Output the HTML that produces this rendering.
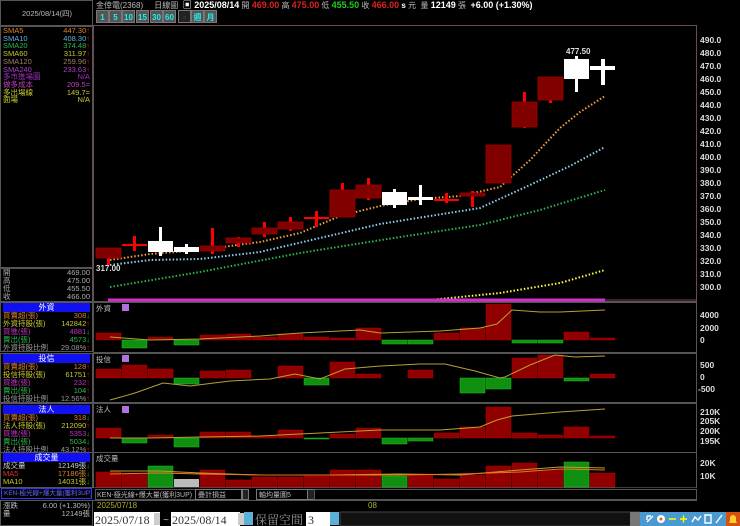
<!DOCTYPE html>
<html><head><meta charset="utf-8"><style>
*{margin:0;padding:0;box-sizing:border-box}
body{width:740px;height:526px;background:#000;overflow:hidden;position:relative;font-family:"Liberation Sans","Noto Sans CJK TC",sans-serif;font-size:8px;color:#ccc}
.a{position:absolute;white-space:nowrap}
.r{position:absolute;left:3px;right:3px;height:8px;line-height:8px;font-size:7.5px}
.r span{position:absolute;right:0}
.hd{position:absolute;left:3px;width:87px;height:9px;background:#1010f0;color:#fff;text-align:center;line-height:9px;font-size:8px}
.box{position:absolute;border:1px solid #555}
.btn{position:absolute;top:10px;height:13px;width:13px;background:#555;color:#2ee;font-size:8px;font-weight:bold;text-align:center;line-height:13px;border:1px solid #777}
</style></head><body>
<div class="box" style="left:0;top:0;width:93px;height:26px"></div>
<div class="a" style="left:22px;top:8px;color:#bbb;font-size:7.5px">2025/08/14(四)</div>
<div class="box" style="left:0;top:26px;width:93px;height:242px"></div>
<div style="position:absolute;left:0;top:27px;width:93px">
<div class="r" style="top:0;color:#d9822b">SMA5<span>447.30<b style="color:#f00">↑</b></span></div>
<div class="r" style="top:7.7px;color:#5ab4e0">SMA10<span>408.30<b style="color:#f00">↑</b></span></div>
<div class="r" style="top:15.4px;color:#2db84a">SMA20<span>374.48<b style="color:#f00">↑</b></span></div>
<div class="r" style="top:23.1px;color:#c8c832">SMA60<span>311.97<b style="color:#f00">↑</b></span></div>
<div class="r" style="top:30.8px;color:#a08060">SMA120<span>259.96<b style="color:#f00">↑</b></span></div>
<div class="r" style="top:38.5px;color:#b040d0">SMA240<span>233.63<b style="color:#f00">↑</b></span></div>
<div class="r" style="top:46.2px;color:#a030c0">多市進場圖<span>N/A</span></div>
<div class="r" style="top:53.9px;color:#c040c0">做多成本<span>209.5=</span></div>
<div class="r" style="top:61.6px;color:#c8c832">多出場線<span>149.7=</span></div>
<div class="r" style="top:69.3px;color:#c8c832">面場<span>N/A</span></div>
</div>
<div class="box" style="left:0;top:268px;width:93px;height:34px"></div>
<div style="position:absolute;left:0;top:269px;width:93px;color:#aaa">
<div class="r" style="top:0">開<span>469.00</span></div>
<div class="r" style="top:8px">高<span>475.00</span></div>
<div class="r" style="top:16px">低<span>455.50</span></div>
<div class="r" style="top:24px">收<span>466.00</span></div>
</div>
<div class="box" style="left:0;top:302px;width:93px;height:50px"></div>
<div class="hd" style="top:303px">外資</div>
<div style="position:absolute;left:0;top:312px;width:93px">
<div class="r" style="top:0;color:#d9822b">買賣超(張)<span>308<b style="color:#0c0">↓</b></span></div>
<div class="r" style="top:8px;color:#c8c832">外資持股(張)<span>142842<b style="color:#f00">↑</b></span></div>
<div class="r" style="top:16px;color:#c030c0">買進(張)<span>4881<b style="color:#0c0">↓</b></span></div>
<div class="r" style="top:24px;color:#2db84a">賣出(張)<span>4573<b style="color:#0c0">↓</b></span></div>
<div class="r" style="top:32px;color:#999">外資持股比例<span>29.08%<b style="color:#f00">↑</b></span></div>
</div>
<div class="box" style="left:0;top:353px;width:93px;height:50px"></div>
<div class="hd" style="top:354px">投信</div>
<div style="position:absolute;left:0;top:363px;width:93px">
<div class="r" style="top:0;color:#d9822b">買賣超(張)<span>128<b style="color:#f00">↑</b></span></div>
<div class="r" style="top:8px;color:#c8c832">投信持股(張)<span>61751<b style="color:#f00">↑</b></span></div>
<div class="r" style="top:16px;color:#c030c0">買進(張)<span>232<b style="color:#f00">↑</b></span></div>
<div class="r" style="top:24px;color:#2db84a">賣出(張)<span>104<b style="color:#f00">↑</b></span></div>
<div class="r" style="top:32px;color:#999">投信持股比例<span>12.56%<b style="color:#f00">↑</b></span></div>
</div>
<div class="box" style="left:0;top:403px;width:93px;height:50px"></div>
<div class="hd" style="top:405px">法人</div>
<div style="position:absolute;left:0;top:414px;width:93px">
<div class="r" style="top:0;color:#d9822b">買賣超(張)<span>318<b style="color:#0c0">↓</b></span></div>
<div class="r" style="top:8px;color:#c8c832">法人持股(張)<span>212090<b style="color:#f00">↑</b></span></div>
<div class="r" style="top:16px;color:#c030c0">買進(張)<span>5353<b style="color:#0c0">↓</b></span></div>
<div class="r" style="top:24px;color:#2db84a">賣出(張)<span>5034<b style="color:#0c0">↓</b></span></div>
<div class="r" style="top:32px;color:#999">法人持股比例<span>43.12%<b style="color:#f00">↑</b></span></div>
</div>
<div class="box" style="left:0;top:452px;width:93px;height:36px"></div>
<div class="hd" style="top:453px">成交量</div>
<div style="position:absolute;left:0;top:462px;width:93px">
<div class="r" style="top:0;color:#ccc">成交量<span>12149張<b style="color:#0c0">↓</b></span></div>
<div class="r" style="top:8px;color:#e03030">MA5<span style="color:#d9822b">17186張<b style="color:#0c0">↓</b></span></div>
<div class="r" style="top:16px;color:#c8c832">MA10<span>14031張<b style="color:#0c0">↓</b></span></div>
</div>
<div class="a" style="left:1px;top:488px;width:91px;height:11px;border:1px solid #33f;color:#66f;font-size:6.5px;line-height:9px;padding-left:2px;overflow:hidden">KEN-極光線+爆大量(獲利3UP)</div>
<div class="box" style="left:0;top:500px;width:93px;height:26px"></div>
<div style="position:absolute;left:0;top:502px;width:93px;color:#bbb">
<div class="r" style="top:0">漲跌<span>6.00 (+1.30%)</span></div>
<div class="r" style="top:8px">量<span>12149張</span></div>
</div>

<div class="a" style="left:96px;top:0;font-size:8px;color:#bbb;line-height:10px">金倖電(2368) &nbsp; &nbsp; 日線圖 &nbsp;<b style="color:#fff;font-size:9px">▣ 2025/08/14</b> 開 <b style="color:#e02020;font-size:9px">469.00</b> 高 <b style="color:#e02020;font-size:9px">475.00</b> 低 <b style="color:#2c2;font-size:9px">455.50</b> 收 <b style="color:#e02020;font-size:9px">466.00</b> <b style="color:#fff">s</b> 元 &nbsp;量 <b style="color:#fff;font-size:9px">12149</b> 張 &nbsp;<b style="color:#fff;font-size:9px">+6.00 (+1.30%)</b></div>
<div class="btn" style="left:96px">1</div><div class="btn" style="left:109px">5</div><div class="btn" style="left:122px">10</div><div class="btn" style="left:136px">15</div><div class="btn" style="left:150px">30</div><div class="btn" style="left:163px">60</div><div class="btn" style="left:178px;background:#222;color:#555">▫</div><div class="btn" style="left:191px">週</div><div class="btn" style="left:204px">月</div>

<svg class="a" style="left:0;top:0" width="740" height="526" viewBox="0 0 740 526">
<g fill="none" stroke="#6b4a55"><rect x="93.5" y="25.5" width="603" height="276"/></g>
<g stroke="#555" fill="none"><rect x="93.5" y="302.5" width="603" height="50"/><rect x="93.5" y="353.5" width="603" height="49"/><rect x="93.5" y="403.5" width="603" height="49"/><rect x="93.5" y="452.5" width="603" height="48"/></g>
<line x1="93" y1="488" x2="697" y2="488" stroke="#777"/>
<g fill="#ddd" font-size="8.5" font-weight="bold" font-family="Liberation Sans">
<text x="700" y="43">490.0</text><text x="700" y="56">480.0</text><text x="700" y="69">470.0</text><text x="700" y="82">460.0</text><text x="700" y="95">450.0</text><text x="700" y="108">440.0</text><text x="700" y="121">430.0</text><text x="700" y="134">420.0</text><text x="700" y="147">410.0</text><text x="700" y="160">400.0</text><text x="700" y="173">390.0</text><text x="700" y="186">380.0</text><text x="700" y="199">370.0</text><text x="700" y="212">360.0</text><text x="700" y="225">350.0</text><text x="700" y="238">340.0</text><text x="700" y="251">330.0</text><text x="700" y="264">320.0</text><text x="700" y="277">310.0</text><text x="700" y="290">300.0</text>
<text x="700" y="318">4000</text><text x="700" y="331">2000</text><text x="700" y="343">0</text>
<text x="700" y="368">500</text><text x="700" y="380">0</text><text x="698" y="392">-500</text>
<text x="700" y="415">210K</text><text x="700" y="424">205K</text><text x="700" y="434">200K</text><text x="700" y="444">195K</text>
<text x="700" y="466">20K</text><text x="700" y="479">10K</text><text x="700" y="496">200</text>
<text x="566" y="54" font-size="8">477.50</text><text x="96" y="271" font-size="8">317.00</text>
</g>
<polyline fill="none" stroke="#ffff40" stroke-width="2" stroke-dasharray="1.5 2" points="430,300 500,293 560,283 605,270"/>
<polyline fill="none" stroke="#2db84a" stroke-width="2" stroke-dasharray="1.5 2" points="110,287 200,272 300,253 400,237 480,225 540,210 605,190"/>
<polyline fill="none" stroke="#8ed0f0" stroke-width="2" stroke-dasharray="1.5 2" points="110,265 150,260 200,259 260,252 320,238 380,224 430,216 480,208 530,185 570,166 605,147"/>
<polyline fill="none" stroke="#f0a040" stroke-width="2" stroke-dasharray="1.5 2" points="110,260 150,254 200,250 260,242 300,233 340,216 380,206 420,199 460,196 500,187 530,160 560,128 580,112 605,96"/>
<line x1="108" y1="300" x2="605" y2="300" stroke="#d030d0" stroke-width="3"/>
<line x1="605" y1="300" x2="697" y2="300" stroke="#6b4a55"/>
<g fill="#ff0000">
<rect x="107" y="258" width="3" height="7"/><rect x="133" y="236" width="3" height="15"/><rect x="211" y="228" width="3" height="26"/><rect x="237" y="237" width="3" height="10"/><rect x="263" y="222" width="3" height="15"/><rect x="289" y="217" width="3" height="14"/><rect x="315" y="211" width="3" height="16"/><rect x="341" y="183" width="3" height="8"/><rect x="367" y="178" width="3" height="22"/><rect x="445" y="193" width="3" height="10"/><rect x="471" y="191" width="3" height="16"/><rect x="523" y="92" width="3" height="36"/><rect x="549" y="99" width="3" height="4"/>
<rect x="122" y="244" width="25" height="2"/><rect x="304" y="217" width="25" height="2"/><rect x="434" y="199" width="25" height="2"/>
</g>
<g fill="#800000" stroke="#a00000" stroke-width="0.8">
<rect x="96" y="248" width="25" height="10"/><rect x="200" y="246" width="25" height="5"/><rect x="226" y="238" width="25" height="5"/><rect x="252" y="228" width="25" height="6"/><rect x="278" y="222" width="25" height="7"/><rect x="330" y="190" width="25" height="27"/><rect x="356" y="185" width="25" height="13"/><rect x="460" y="193" width="25" height="3"/><rect x="486" y="145" width="25" height="38"/><rect x="512" y="102" width="25" height="25"/><rect x="538" y="77" width="25" height="23"/>
</g>
<g fill="#fff">
<rect x="159" y="227" width="3" height="29"/><rect x="148" y="241" width="25" height="11"/>
<rect x="185" y="244" width="3" height="10"/><rect x="174" y="247" width="25" height="5"/>
<rect x="393" y="189" width="3" height="19"/><rect x="382" y="192" width="25" height="13"/>
<rect x="419" y="185" width="3" height="20"/><rect x="408" y="197" width="25" height="3"/>
<rect x="575" y="56" width="3" height="36"/><rect x="564" y="59" width="25" height="20"/>
<rect x="601" y="59" width="4" height="26"/><rect x="590" y="66" width="25" height="4"/>
</g>
<g fill="#bbb" font-size="7.5"><text x="96" y="311">外資</text><text x="96" y="362">投信</text><text x="96" y="412">法人</text><text x="96" y="461">成交量</text></g>
<g fill="#b070e0"><rect x="122" y="304" width="7" height="7"/><rect x="122" y="355" width="7" height="7"/><rect x="122" y="406" width="7" height="7"/></g>
<g fill="#900000" stroke="#b00000" stroke-width="0.5">
<rect x="96" y="333" width="25" height="7"/><rect x="148" y="337" width="25" height="3"/><rect x="200" y="335" width="25" height="5"/><rect x="226" y="334" width="25" height="6"/><rect x="252" y="337" width="25" height="3"/><rect x="278" y="334" width="25" height="6"/><rect x="304" y="337" width="25" height="3"/><rect x="330" y="338" width="25" height="2"/><rect x="356" y="328" width="25" height="12"/><rect x="434" y="333" width="25" height="7"/><rect x="460" y="328" width="25" height="12"/><rect x="486" y="304" width="25" height="36"/><rect x="564" y="332" width="25" height="8"/><rect x="590" y="338" width="25" height="2"/>
</g>
<g fill="#109010" stroke="#20c020" stroke-width="0.5">
<rect x="122" y="340" width="25" height="8"/><rect x="174" y="340" width="25" height="5"/><rect x="382" y="340" width="25" height="4"/><rect x="408" y="340" width="25" height="4"/><rect x="512" y="340" width="25" height="3"/><rect x="538" y="340" width="25" height="3"/>
</g>
<polyline fill="none" stroke="#b8a030" stroke-width="1" points="110,337 150,340 200,339 260,336 300,333 360,330 380,333 440,331 480,328 497,324 512,310 540,312 560,312 605,310"/>
<g fill="#900000" stroke="#b00000" stroke-width="0.5">
<rect x="96" y="369" width="25" height="9"/><rect x="122" y="365" width="25" height="13"/><rect x="148" y="369" width="25" height="9"/><rect x="200" y="371" width="25" height="7"/><rect x="226" y="370" width="25" height="8"/><rect x="278" y="366" width="25" height="12"/><rect x="330" y="362" width="25" height="16"/><rect x="356" y="374" width="25" height="4"/><rect x="408" y="370" width="25" height="8"/><rect x="512" y="358" width="25" height="20"/><rect x="538" y="355" width="25" height="23"/><rect x="590" y="374" width="25" height="4"/>
</g>
<g fill="#109010" stroke="#20c020" stroke-width="0.5">
<rect x="174" y="378" width="25" height="6"/><rect x="304" y="378" width="25" height="7"/><rect x="460" y="378" width="25" height="15"/><rect x="486" y="378" width="25" height="11"/><rect x="564" y="378" width="25" height="3"/>
</g>
<polyline fill="none" stroke="#b8a030" stroke-width="1" points="110,400 135,393 163,383 190,386 230,381 270,379 295,374 320,379 345,369 380,366 420,364 445,364 475,371 500,378 505,377 530,365 555,355 575,357 605,356"/>
<g fill="#900000" stroke="#b00000" stroke-width="0.5">
<rect x="96" y="428" width="25" height="10"/><rect x="148" y="435" width="25" height="3"/><rect x="200" y="432" width="25" height="6"/><rect x="226" y="432" width="25" height="6"/><rect x="252" y="436" width="25" height="2"/><rect x="278" y="430" width="25" height="8"/><rect x="330" y="434" width="25" height="4"/><rect x="356" y="428" width="25" height="10"/><rect x="434" y="433" width="25" height="5"/><rect x="460" y="427" width="25" height="11"/><rect x="486" y="407" width="25" height="31"/><rect x="512" y="433" width="25" height="5"/><rect x="538" y="435" width="25" height="3"/><rect x="564" y="427" width="25" height="11"/><rect x="590" y="436" width="25" height="2"/>
</g>
<g fill="#109010" stroke="#20c020" stroke-width="0.5">
<rect x="122" y="438" width="25" height="5"/><rect x="174" y="438" width="25" height="9"/><rect x="304" y="438" width="25" height="1"/><rect x="382" y="438" width="25" height="6"/><rect x="408" y="438" width="25" height="3"/>
</g>
<polyline fill="none" stroke="#b8a030" stroke-width="1" points="110,438 150,438 200,437 260,436 300,434 340,432 380,430 440,430 480,427 497,420 512,416 560,412 605,409"/>
<g fill="#900000" stroke="#b00000" stroke-width="0.5">
<rect x="96" y="472" width="25" height="15"/><rect x="122" y="474" width="25" height="13"/><rect x="200" y="470" width="25" height="17"/><rect x="226" y="480" width="25" height="7"/><rect x="252" y="477" width="25" height="10"/><rect x="278" y="477" width="25" height="10"/><rect x="304" y="476" width="25" height="11"/><rect x="330" y="470" width="25" height="17"/><rect x="356" y="470" width="25" height="17"/><rect x="408" y="474" width="25" height="13"/><rect x="434" y="479" width="25" height="8"/><rect x="460" y="475" width="25" height="12"/><rect x="486" y="466" width="25" height="21"/><rect x="512" y="463" width="25" height="24"/><rect x="538" y="470" width="25" height="17"/><rect x="590" y="473" width="25" height="14"/>
</g>
<g fill="#109010" stroke="#20c020" stroke-width="0.5"><rect x="148" y="466" width="25" height="21"/><rect x="382" y="476" width="25" height="11"/><rect x="564" y="462" width="25" height="25"/></g>
<rect x="174" y="479" width="25" height="8" fill="#bbb"/>
<polyline fill="none" stroke="#b8a030" stroke-width="1" points="110,471 160,471 200,473 260,475 330,475 400,474 460,475 520,470 560,467 605,468"/>
<polyline fill="none" stroke="#f07020" stroke-width="1" points="110,474 160,473 200,474 260,475 330,475 400,475 460,474 520,472 560,469 605,470"/>
<rect x="93" y="488" width="647" height="12" fill="#000"/>
<rect x="95.5" y="489.5" width="100" height="10" fill="#000" stroke="#555"/>
<rect x="195.5" y="489.5" width="46" height="10" fill="#000" stroke="#777"/>
<rect x="242.5" y="489.5" width="6" height="10" fill="#222" stroke="#777"/>
<rect x="256.5" y="489.5" width="51" height="10" fill="#000" stroke="#777"/>
<rect x="307.5" y="489.5" width="7" height="10" fill="#222" stroke="#777"/>
<rect x="314.5" y="489.5" width="382" height="10" fill="#000" stroke="#555"/>
<g fill="#bbb" font-size="7"><text x="97" y="497">KEN-極光線+爆大量(獲利3UP)</text><text x="198" y="497">疊計損益</text><text x="259" y="497">軸均量圖5</text></g>
<text x="97" y="508" fill="#b0b030" font-size="8">2025/07/18</text>
<text x="368" y="508" fill="#b0b030" font-size="8">08</text>
<rect x="93" y="511" width="647" height="15" fill="#000"/>
<rect x="94" y="512" width="66" height="14" fill="#fff"/><rect x="154" y="513" width="6" height="12" fill="#ccc"/>
<rect x="171" y="512" width="69" height="14" fill="#fff"/><rect x="238" y="513" width="6" height="12" fill="#ccc"/>
<rect x="244" y="512" width="9" height="13" fill="#5ab0d8"/>
<g font-family="Liberation Serif" fill="#333" font-size="12"><text x="95" y="524">2025/07/18</text><text x="172" y="524">2025/08/14</text></g>
<text x="163" y="523" fill="#bbb" font-size="10">~</text>
<text x="255" y="524" fill="#999" font-size="12" font-family="Noto Serif CJK SC,serif">保留空間</text>
<rect x="306" y="512" width="24" height="14" fill="#fff"/><text x="308" y="524" fill="#333" font-size="12" font-family="Liberation Serif">3</text>
<rect x="330" y="512" width="9" height="13" fill="#5ab0d8"/>
<rect x="340" y="512" width="300" height="14" fill="#111" stroke="#444"/>
<rect x="630" y="512" width="10" height="14" fill="#777"/>
<rect x="640" y="512" width="98" height="14" fill="#4a9ad0"/>
<g fill="#fff" stroke="#fff" stroke-width="1.4">
<path d="M647 522 l6-6 M647 516 v4 M647 516 h4" fill="none"/>
<circle cx="661" cy="519" r="4" stroke="none"/><circle cx="661" cy="519" r="1.5" fill="#f06020" stroke="none"/>
<path d="M669 519 h7 M680 519 h7 M683.5 515.5 v7" fill="none" stroke="#ff0"/>
<path d="M692 522 l3-5 3 3 3-4" fill="none"/>
<path d="M705 515 h6 v8 h-6z" fill="none"/>
<path d="M716 523 l6-8" fill="none"/>
</g>
<rect x="726" y="512" width="14" height="14" fill="#d85010"/>
<path d="M729 523 h8 l-1-2 v-3 a3 3 0 0 0 -6 0 v3z" fill="#ffd030"/>
</svg>
</body></html>
